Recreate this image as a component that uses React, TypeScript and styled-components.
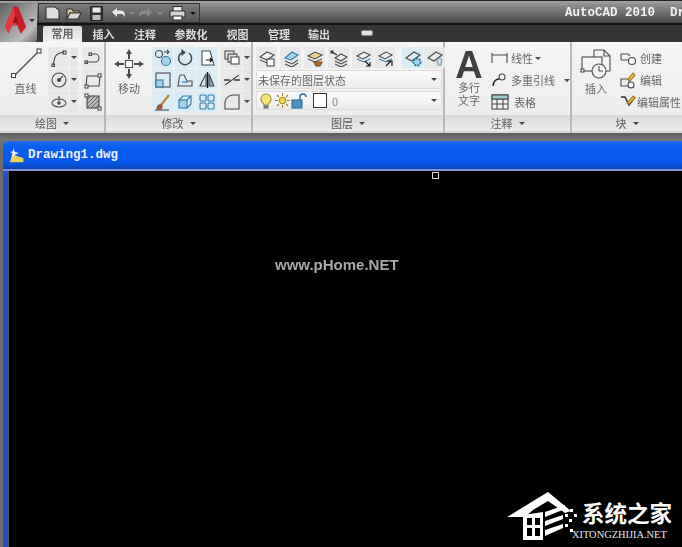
import React from "react";
import styled, { createGlobalStyle, css } from "styled-components";

const Global = createGlobalStyle`
  html, body { margin: 0; padding: 0; background: #000; }
  body { font-family: "Noto Sans CJK SC", "Liberation Sans", sans-serif; }
`;

/* the reference is a soft, low quality capture */
const soft = css`
  filter: blur(0.45px);
`;

const Page = styled.div`
  position: relative;
  width: 682px;
  height: 547px;
  overflow: hidden;
  display: flex;
  flex-direction: column;
  background: #000;
`;

/* top bars */
const TitleBar = styled.div`
  height: 25px;
  flex: none;
  box-sizing: border-box;
  display: flex;
  align-items: flex-start;
  justify-content: space-between;
  padding: 3px 0 0 38px;
  border-top: 1px solid #222;
  border-bottom: 2px solid #111;
  background: linear-gradient(#a2a2a2, #7e7e7e 35%, #474747);
`;

const QuickBar = styled.div`
  width: 162px;
  height: 20px;
  margin-top: -1px;
  box-sizing: border-box;
  display: flex;
  align-items: center;
  padding-left: 2px;
  border: 1px solid #333;
  background: linear-gradient(#7c7c7c, #565656);
  ${soft}
`;

const QuickSlot = styled.span<{ $w: number }>`
  width: ${(p) => p.$w}px;
  display: flex;
  justify-content: center;
  flex: none;
`;

const AppTitle = styled.div`
  width: 117px;
  overflow: hidden;
  white-space: pre;
  margin-top: 1px;
  font: bold 12.5px/16px "Liberation Mono", monospace;
  color: #f2f2f2;
  ${soft}
`;

const AppButton = styled.div`
  position: absolute;
  left: 0;
  top: 3px;
  width: 37px;
  height: 39px;
  border-radius: 0 0 3px 0;
  background: linear-gradient(135deg, #5e5e5e, #9c9c9c 50%, #bdbdbd 75%, #6a6a6a);
  display: flex;
  align-items: center;
  gap: 1px;
  padding: 0 0 5px 3px;
  box-sizing: border-box;
  ${soft}
`;

const TabBar = styled.div`
  height: 17px;
  flex: none;
  display: flex;
  padding-left: 43px;
  background: #353535;
`;

const Tab = styled.div<{ $w: number; $active?: boolean }>`
  width: ${(p) => p.$w}px;
  height: ${(p) => (p.$active ? 16 : 15)}px;
  margin-top: ${(p) => (p.$active ? 1 : 2)}px;
  text-align: center;
  font-size: 11px;
  font-weight: 700;
  line-height: 15px;
  color: ${(p) => (p.$active ? "#666" : "#dcdcdc")};
  background: ${(p) => (p.$active ? "linear-gradient(#dcdcdc,#f3f3f3)" : "transparent")};
  border-radius: 2px 2px 0 0;
  ${soft}
`;

const Pill = styled.span`
  display: block;
  width: 12px;
  height: 6px;
  margin: 5px 0 0 23px;
  border-radius: 2px;
  background: #e4e4e4;
  border: 1px solid #888;
  box-sizing: border-box;
`;

/* ribbon */
const Ribbon = styled.div`
  height: 91px;
  flex: none;
  display: flex;
`;

const Panel = styled.section<{ $w: number }>`
  width: ${(p) => p.$w}px;
  flex: none;
  display: flex;
  flex-direction: column;
  border-right: 2px solid #b9b9b9;
  box-sizing: border-box;
  &:last-child { border-right: 0; }
`;

const PanelBody = styled.div<{ $pad?: string }>`
  height: 73px;
  flex: none;
  box-sizing: border-box;
  padding: ${(p) => p.$pad ?? "5px 0 0 0"};
  display: flex;
  background: linear-gradient(#f5f5f5, #ededed);
  ${soft}
`;

const PanelFoot = styled.div`
  height: 18px;
  flex: none;
  display: flex;
  align-items: center;
  justify-content: center;
  gap: 6px;
  font-size: 11px;
  color: #5a5a5a;
  background: linear-gradient(#d9d9d9, #ececec);
  border-bottom: 2px solid #dadada;
  box-sizing: border-box;
  ${soft}
`;

const Caret = styled.span<{ $color?: string }>`
  display: inline-block;
  width: 0;
  height: 0;
  flex: none;
  border-left: 3px solid transparent;
  border-right: 3px solid transparent;
  border-top: 3px solid ${(p) => p.$color ?? "#444"};
`;

const BigTool = styled.div<{ $w: number }>`
  width: ${(p) => p.$w}px;
  flex: none;
  display: flex;
  flex-direction: column;
  align-items: center;
  font-size: 11px;
  line-height: 14px;
  color: #666;
`;

const BigIcon = styled.div`
  height: 34px;
  display: flex;
  align-items: center;
`;

const Rows = styled.div<{ $gap?: number }>`
  display: flex;
  flex-direction: column;
  gap: ${(p) => p.$gap ?? 1}px;
`;

const Row = styled.div<{ $gap?: number }>`
  display: flex;
  gap: ${(p) => p.$gap ?? 1}px;
`;

const Tile = styled.div<{ $blue?: boolean; $w?: number }>`
  width: ${(p) => p.$w ?? 21}px;
  height: 21px;
  flex: none;
  display: flex;
  align-items: center;
  justify-content: center;
  background: ${(p) => (p.$blue ? "#dcecf5" : "#e9e9e9")};
  border-radius: 1px;
`;

const CaretTile = styled(Tile)`
  width: 8px;
  background: #e6e6e6;
`;

const Spacer = styled.div<{ $w: number }>`
  width: ${(p) => p.$w}px;
  flex: none;
`;

const Combo = styled.div`
  width: 186px;
  height: 19px;
  box-sizing: border-box;
  display: flex;
  align-items: center;
  justify-content: space-between;
  padding: 0 4px 0 1px;
  font-size: 11px;
  color: #666;
  background: linear-gradient(#fbfbfb, #ececec);
  border: 1px solid #dcdcdc;
`;

const ComboLeft = styled.div`
  display: flex;
  align-items: center;
  gap: 1px;
`;

const ZeroText = styled.span`
  margin-left: 4px;
  color: #888;
`;

const ActionRow = styled.div<{ $gap?: number }>`
  height: 22px;
  display: flex;
  align-items: center;
  gap: ${(p) => p.$gap ?? 2}px;
  font-size: 11px;
  color: #666;
  white-space: nowrap;
`;

const BigA = styled.div`
  height: 34px;
  font: 700 38px/36px "Liberation Sans", sans-serif;
  color: #404040;
`;

const StackLabel = styled.div`
  font-size: 11px;
  line-height: 13px;
  color: #666;
  text-align: center;
`;

/* drawing window */
const Gap = styled.div`
  height: 8px;
  flex: none;
  background: linear-gradient(#5c5c5c, #7a7a7a);
`;

const DocWindow = styled.div`
  flex: 1;
  display: flex;
  flex-direction: column;
  background: #6d6d6d;
  padding-left: 3px;
`;

const DocTitle = styled.div`
  height: 30px;
  flex: none;
  box-sizing: border-box;
  display: flex;
  align-items: center;
  gap: 3px;
  padding: 0 0 0 6px;
  border-radius: 5px 0 0 0;
  background: linear-gradient(#1f6fe8, #0a5df0 20%, #0757ea 75%, #0a44b4);
  border-bottom: 2px solid #8090d0;
  font: bold 12.5px/16px "Liberation Mono", monospace;
  color: #eef2ff;
`;

const DocBody = styled.div`
  flex: 1;
  background: #000;
  border-left: 5px solid #2450c8;
  box-shadow: inset 1px 0 0 #555;
`;

const PickBox = styled.div`
  position: absolute;
  left: 432px;
  top: 172px;
  width: 7px;
  height: 7px;
  box-sizing: border-box;
  border: 1px solid #d8d8d8;
`;

const PhomeMark = styled.div`
  position: absolute;
  left: 275px;
  top: 255px;
  font: bold 15px/20px "Liberation Sans", sans-serif;
  color: #a8a8a8;
  white-space: nowrap;
  ${soft}
`;

const SiteMark = styled.div`
  position: absolute;
  left: 505px;
  top: 490px;
  width: 172px;
  height: 56px;
`;

const SiteName = styled.div`
  position: absolute;
  left: 77px;
  top: 6px;
  font-size: 22.5px;
  font-weight: 700;
  line-height: 32px;
  color: #fff;
  white-space: nowrap;
`;

const SiteUrl = styled.div`
  position: absolute;
  left: 67px;
  top: 38px;
  font: 10.4px/14px "Liberation Serif", serif;
  color: #e8e8e8;
  white-space: nowrap;
`;

/* icons */
const Ico = ({ s = 18, w, h, children }: { s?: number; w?: number; h?: number; children: React.ReactNode }) => (
  <svg width={w ?? s} height={h ?? s} viewBox={`0 0 ${w ?? s} ${h ?? s}`} fill="none" stroke="#4a4a4a" strokeWidth="1.1">
    {children}
  </svg>
);

const Dark = "#4a4a4a";
const Blue = "#a9d3ea";

const icons: Record<string, React.ReactNode> = {
  polyline: <><path d="M3 16 L5 8 Q7 4 14 3" /><rect x="13" y="2" width="3" height="3" /><rect x="2" y="15" width="2.5" height="2.5" /></>,
  circle: <><circle cx="9" cy="9" r="7" /><circle cx="9" cy="9" r="1.5" fill={Dark} /><path d="M9 9 L13 5" /></>,
  ellipse: <><ellipse cx="9" cy="10" rx="7" ry="4" /><circle cx="9" cy="10" r="1.2" fill={Dark} /><path d="M9 3v5" /></>,
  hook: <><path d="M2 13 H11 A4 4 0 0 0 11 5 H7" /><rect x="1" y="12" width="2.5" height="2.5" /><rect x="5" y="4" width="2.5" height="2.5" /></>,
  rect: <><path d="M3 5 H16 L15 15 H2 Z" /><rect x="14" y="3" width="3" height="3" fill="#fff" /><rect x="1" y="14" width="3" height="3" fill="#fff" /></>,
  hatch: <><rect x="3" y="3" width="12" height="12" fill="#bbb" /><path d="M3 7l4-4M3 11l8-8M3 15l12-12M7 15l8-8M11 15l4-4" strokeWidth=".8" /><rect x="1" y="1" width="3" height="3" fill="#fff" /><rect x="14" y="14" width="3" height="3" fill="#fff" /></>,
  copy: <><circle cx="5" cy="5" r="3.5" /><circle cx="12" cy="12" r="4.5" fill={Blue} stroke="#2b7aa8" /><path d="M10 3h5M13 1l2 2-2 2" /></>,
  rotate: <><path d="M13 4 A6.5 6.5 0 1 1 6 3.5" strokeWidth="1.5" /><path d="M6 1v5l3-2.5z" fill={Dark} /></>,
  stretch: <><path d="M4 2 H12 L16 16 H4 Z" fill="#fff" /><path d="M8 11h6M12 9l2 2-2 2" stroke="#111" /></>,
  layers: <><rect x="2" y="2" width="9" height="8" /><rect x="5" y="5" width="9" height="8" fill="#ddd" /><rect x="8" y="8" width="8" height="7" fill="#fff" /></>,
  scale: <><rect x="2" y="2" width="14" height="14" /><rect x="2" y="9" width="7" height="7" fill={Blue} stroke="#2b7aa8" /></>,
  fillet: <><path d="M2 15 H16 V10 H11 L8 4 H5 Q3 4 3 9 Z" /><path d="M6 11h6" stroke="#2b7aa8" /></>,
  mirror: <><path d="M8 3 L2 15 H8 Z" /><path d="M11 3 L16 15 H11 Z" fill="#7fa8c0" /><path d="M9.500 1v16" stroke="#111" strokeWidth="1.4" /></>,
  trim: <><path d="M2 14 L16 4" /><path d="M1 9h6M11 9h6" stroke="#333" strokeWidth="1.3" /></>,
  brush: <><path d="M15 2 L7 12" stroke="#b98a3a" strokeWidth="2.4" /><path d="M3 16 Q4 11 7 12 Q9 14 7 16 Z" fill="#c05a2a" stroke="#7a4a2a" /><path d="M1 17h14" /></>,
  box3d: <><rect x="3" y="7" width="8" height="8" fill={Blue} stroke="#2b7aa8" /><path d="M3 7l4-4h8v8l-4 4M11 7l4-4" stroke="#2b7aa8" /></>,
  array: <><rect x="2" y="2" width="6" height="6" rx="1" stroke="#2b7aa8" /><rect x="10" y="2" width="6" height="6" rx="1" stroke="#2b7aa8" /><rect x="2" y="10" width="6" height="6" rx="1" stroke="#2b7aa8" /><rect x="10" y="10" width="6" height="6" rx="1" stroke="#2b7aa8" /></>,
  chamfer: <><path d="M2 16 V9 Q3 3 10 2 H16 V16 Z" /></>,
  layerA: <><path d="M2 8l7-5 7 3-7 5z" fill="#f4f4f4" /><path d="M2 11l7 3 7-4" /><rect x="9" y="10" width="7" height="7" fill="#fff" /></>,
  layerB: <><path d="M3 9l7-6 6 3-7 5z" fill={Blue} stroke="#2b7aa8" /><path d="M3 12l7 3 6-4M3 15l7 3 6-4" /></>,
  layerC: <><path d="M2 7l7-4 7 3-7 4z" fill="#f0d090" /><path d="M2 10l7 3 7-3" /><path d="M8 13h8l-2 4h-4z" fill="#b06a22" stroke="#7a4a22" /></>,
  layerD: <><path d="M5 9l6-4 6 3-6 4z" /><path d="M5 12l6 3 6-3M5 15l6 3 6-3" /><path d="M2 3l5 3" stroke="#222" /><rect x="1" y="2" width="2" height="2" fill="#222" /></>,
  layerE: <><path d="M3 7l7-4 6 3-7 4z" fill="#eee" /><path d="M3 10l7 3 6-3" stroke="#2b7aa8" /><path d="M11 12l5 5M16 13v4h-4" stroke="#111" /></>,
  layerF: <><path d="M3 7l7-4 6 3-7 4z" fill="#eee" /><path d="M3 10l7 3 6-3" stroke="#2b7aa8" /><path d="M15 12l-5 5M11 12h5v5" stroke="#111" /></>,
  gear: <><path d="M2 9l8-6 6 3-8 6z" /><circle cx="13" cy="13" r="3.5" fill={Blue} stroke="#2b7aa8" strokeWidth="2" strokeDasharray="2 1" /></>,
  bulbTile: <><path d="M2 9l8-6 6 3-8 6z" /><path d="M13 9a3 3 0 0 1 2 5v2h-3v-2a3 3 0 0 1 1-5z" fill="#cfe4f2" stroke="#6a9ab8" /></>,
  dim: <><path d="M1 4v10M16 4v10M1 6h15" /></>,
  leader: <><path d="M2 15 Q3 8 8 8" stroke="#222" strokeWidth="1.5" /><circle cx="11" cy="6" r="3" /></>,
  table: <><rect x="1" y="2" width="16" height="14" fill="#f4f4f4" /><path d="M1 6h16M1 11h16M6 6v10M12 6v10" /><rect x="1" y="2" width="16" height="4" fill="#9cc" /></>,
  create: <><path d="M2 5h7M2 11h9M2 5v6M9 5l2 2" /><circle cx="13" cy="12" r="3.500" fill="#fff" /></>,
  edit: <><path d="M2 8h8v7H2z" /><circle cx="12" cy="14" r="3" fill="#fff" /><path d="M9 8l5-6 2 2-5 6z" fill="#e8b93a" stroke="#a07a20" /></>,
  attr: <><path d="M2 4l4 0 4 8 6-8" stroke="#333" strokeWidth="1.6" /><path d="M8 10l6-7 2 2-6 6z" fill="#e8b93a" stroke="#a07a20" /></>,
};

const Icon = ({ name, s }: { name: string; s?: number }) => <Ico s={s}>{icons[name]}</Ico>;

const LineIcon = () => (
  <Ico w={34} h={34}>
    <path d="M5 29 L30 4" strokeWidth="1.2" />
    <rect x="2.5" y="26.5" width="4" height="4" fill="#fff" />
    <rect x="28" y="2" width="4" height="4" fill="#fff" />
  </Ico>
);

const MoveIcon = () => (
  <Ico w={32} h={34}>
    <rect x="12.5" y="13.5" width="7" height="7" fill="#fff" />
    <g fill={Dark} stroke="none">
      <path d="M16 2l3 5h-2v5h-2V7h-2zM16 32l3-5h-2v-5h-2v5h-2zM1 17l5-3v2h5v2H6v2zM31 17l-5-3v2h-5v2h5v2z" />
    </g>
  </Ico>
);

const InsertIcon = () => (
  <Ico w={32} h={32}>
    <path d="M14 9V2h10l6 6v15h-6" fill="#f4f4f4" />
    <path d="M24 2v6h6" />
    <rect x="2" y="9" width="20" height="14" fill="#f4f4f4" />
    <circle cx="19" cy="23" r="7" fill="#f4f4f4" />
    <path d="M19 23v-5M19 23h4" />
    <rect x="1" y="21" width="3" height="3" fill="#fff" />
  </Ico>
);

const BulbIcon = () => (
  <Ico s={16}>
    <path d="M8 1a5 5 0 0 1 3 9l-1 2H6l-1-2a5 5 0 0 1 3-9z" fill="#f4e27a" stroke="#a09030" />
    <path d="M6 13h4v2H6z" fill="#888" stroke="#666" />
  </Ico>
);

const SunIcon = () => (
  <Ico s={15}>
    <circle cx="7.5" cy="7.5" r="3.2" fill="#f4d34a" stroke="#a09030" />
    <path d="M7.5 0v3M7.5 12v3M0 7.5h3M12 7.5h3M2 2l2 2M11 11l2 2M13 2l-2 2M4 11l-2 2" stroke="#a08020" />
  </Ico>
);

const LockIcon = () => (
  <Ico s={16}>
    <path d="M9 7V4a3 3 0 0 1 6 0" stroke="#2b6a98" strokeWidth="1.4" />
    <rect x="1" y="7" width="10" height="8" fill="#4e93c4" stroke="#2b6a98" />
  </Ico>
);

const Swatch = styled.span`
  display: block;
  width: 12px;
  height: 13px;
  margin-left: 5px;
  background: #fff;
  border: 1px solid #333;
`;

const LogoA = () => (
  <svg width="25" height="30" viewBox="0 0 26 34">
    <path d="M11 1 L16 2 L25 25 L19 33 L15 23 L9 23 L5 32 L1 24 Z" fill="#c81f26" />
    <path d="M11 1 L14 23 L9 23 L5 32 L1 24 Z" fill="#e0383c" />
    <path d="M13 12 L16 20 L10 20 Z" fill="#8f1218" />
  </svg>
);

const FileGlyph = () => (
  <Ico w={15} h={14}>
    <path d="M1 1h9l4 3v9H1z" fill="#dedede" stroke="#333" />
  </Ico>
);

const OpenGlyph = () => (
  <Ico w={16} h={14}>
    <path d="M1 3h5l1 2h6v2H4l-3 6z" fill="#d9c98e" stroke="#333" />
    <path d="M4 7h11l-3 6H1z" fill="#d8d8d8" stroke="#333" />
  </Ico>
);

const SaveGlyph = () => (
  <Ico w={13} h={15}>
    <rect x="0.5" y="0.5" width="12" height="14" rx="1" fill="#333" stroke="#222" />
    <rect x="2.5" y="1.5" width="8" height="5" fill="#e8e8e8" stroke="none" />
    <rect x="2.5" y="9" width="8" height="5" fill="#bbb" stroke="none" />
  </Ico>
);

const ArrowGlyph = ({ back, dim }: { back?: boolean; dim?: boolean }) => (
  <svg width="14" height="11" viewBox="0 0 14 11" style={back ? undefined : { transform: "scaleX(-1)" }}>
    <path d="M1 4l5-4v2.500h4a4 4 0 0 1 3 6.500 3 3 0 0 0-3-3H6V9z" fill={dim ? "#8b8b8b" : "#e8e8e8"} />
  </svg>
);

const PrintGlyph = () => (
  <Ico w={17} h={15}>
    <rect x="4" y="0.500" width="9" height="5" fill="#eee" stroke="#333" />
    <rect x="1" y="5" width="15" height="6" rx="1" fill="#d4d4d4" stroke="#333" />
    <rect x="4" y="10" width="9" height="4" fill="#fff" stroke="#333" />
  </Ico>
);

const HouseLogo = () => (
  <svg width="72" height="56" viewBox="0 0 72 56" fill="#fff">
    <path d="M2 27 L43 2 L66 21 L60 23 L43 11 L28 20 L20 27 Z" />
    <path d="M18 25 L38 22 V50 L18 50 Z M22 28 V35 H27 V28 Z M30 28 V35 H35 V28 Z M22 38 V46 H27 V38 Z M30 38 V46 H35 V38 Z" fillRule="evenodd" />
    <path d="M40 22 L60 15 V19 L40 27 Z M40 31 L58 25 V29 L40 36 Z M40 40 L58 34 V38 L40 46 Z" />
    <g>
      <rect x="60" y="24" width="3" height="3" />
      <rect x="65" y="19" width="3" height="3" />
      <rect x="64" y="29" width="3" height="3" />
      <rect x="69" y="24" width="3" height="3" />
      <rect x="60" y="34" width="3" height="3" />
      <rect x="65" y="39" width="3" height="3" />
    </g>
  </svg>
);

const DocGlyph = () => (
  <svg width="16" height="18" viewBox="0 0 19 19">
    <path d="M1 18 L4 8 L10 11 L17 13 V18 Z" fill="#ecd45a" />
    <path d="M5 1 l2 5 5 1 -5 2 -3 3 0-5 -3-1 4-1z" fill="#f4f4f4" />
  </svg>
);

const tabs: [string, number][] = [
  ["插入", 43],
  ["注释", 40],
  ["参数化", 52],
  ["视图", 41],
  ["管理", 42],
  ["输出", 38],
];

const layerIcons = ["layerA", "layerB", "layerC", "layerD"];

export default function App() {
  return (
    <Page>
      <Global />
      <TitleBar>
        <QuickBar>
          <QuickSlot $w={22}><FileGlyph /></QuickSlot>
          <QuickSlot $w={22}><OpenGlyph /></QuickSlot>
          <QuickSlot $w={22}><SaveGlyph /></QuickSlot>
          <QuickSlot $w={22}><ArrowGlyph back /></QuickSlot>
          <QuickSlot $w={6}><Caret $color="#888" /></QuickSlot>
          <QuickSlot $w={22}><ArrowGlyph dim /></QuickSlot>
          <QuickSlot $w={6}><Caret $color="#888" /></QuickSlot>
          <QuickSlot $w={3} />
          <QuickSlot $w={22}><PrintGlyph /></QuickSlot>
          <QuickSlot $w={10}><Caret $color="#111" /></QuickSlot>
        </QuickBar>
        <AppTitle>AutoCAD 2010  Dr</AppTitle>
      </TitleBar>
      <TabBar>
        <Tab $w={39} $active>常用</Tab>
        {tabs.map(([label, w]) => (
          <Tab key={label} $w={w}>{label}</Tab>
        ))}
        <Pill />
      </TabBar>
      <Ribbon>
        <Panel $w={106}>
          <PanelBody>
            <Spacer $w={3} />
            <BigTool $w={45}>
              <BigIcon><LineIcon /></BigIcon>
              直线
            </BigTool>
            <Rows>
              {["polyline", "circle", "ellipse"].map((n) => (
                <Row key={n}>
                  <Tile><Icon name={n} /></Tile>
                  <CaretTile><Caret /></CaretTile>
                </Row>
              ))}
            </Rows>
            <Spacer $w={4} />
            <Rows>
              {["hook", "rect", "hatch"].map((n) => (
                <Tile key={n}><Icon name={n} /></Tile>
              ))}
            </Rows>
          </PanelBody>
          <PanelFoot>绘图<Caret /></PanelFoot>
        </Panel>
        <Panel $w={147}>
          <PanelBody>
            <Spacer $w={6} />
            <BigTool $w={34}>
              <BigIcon><MoveIcon /></BigIcon>
              移动
            </BigTool>
            <Spacer $w={6} />
            <Rows>
              {[
                ["copy", "rotate", "stretch", "layers"],
                ["scale", "fillet", "mirror", "trim"],
                ["brush", "box3d", "array", "chamfer"],
              ].map((r) => (
                <Row key={r[0]}>
                  <Tile $blue><Icon name={r[0]} /></Tile>
                  <Tile $blue><Icon name={r[1]} /></Tile>
                  <Tile $blue><Icon name={r[2]} /></Tile>
                  <Spacer $w={2} />
                  <Tile><Icon name={r[3]} /></Tile>
                  <CaretTile><Caret /></CaretTile>
                </Row>
              ))}
            </Rows>
          </PanelBody>
          <PanelFoot>修改<Caret /></PanelFoot>
        </Panel>
        <Panel $w={192}>
          <PanelBody $pad="5px 0 0 3px">
            <Rows $gap={2}>
              <Row $gap={3}>
                <Row $gap={3}>
                  {layerIcons.map((n) => (
                    <Tile key={n}><Icon name={n} /></Tile>
                  ))}
                </Row>
                <Row>
                  <Tile><Icon name="layerE" /></Tile>
                  <Tile><Icon name="layerF" /></Tile>
                </Row>
                <Spacer $w={1} />
                <Row>
                  <Tile $blue><Icon name="gear" /></Tile>
                  <Tile><Icon name="bulbTile" /></Tile>
                </Row>
              </Row>
              <Combo>未保存的图层状态<Caret /></Combo>
              <Combo>
                <ComboLeft>
                  <BulbIcon />
                  <SunIcon />
                  <LockIcon />
                  <Swatch />
                  <ZeroText>0</ZeroText>
                </ComboLeft>
                <Caret />
              </Combo>
            </Rows>
          </PanelBody>
          <PanelFoot>图层<Caret /></PanelFoot>
        </Panel>
        <Panel $w={127}>
          <PanelBody>
            <Spacer $w={9} />
            <BigTool $w={30}>
              <BigA>A</BigA>
              <StackLabel>多行<br />文字</StackLabel>
            </BigTool>
            <Spacer $w={7} />
            <Rows $gap={0}>
              <ActionRow><Icon name="dim" />线性<Caret /></ActionRow>
              <ActionRow><Icon name="leader" />多重引线<Spacer $w={5} /><Caret /></ActionRow>
              <ActionRow><Icon name="table" /><Spacer $w={1} />表格</ActionRow>
            </Rows>
          </PanelBody>
          <PanelFoot>注释<Caret /></PanelFoot>
        </Panel>
        <Panel $w={110}>
          <PanelBody>
            <Spacer $w={6} />
            <BigTool $w={36}>
              <BigIcon><InsertIcon /></BigIcon>
              插入
            </BigTool>
            <Spacer $w={5} />
            <Rows $gap={0}>
              <ActionRow $gap={3}><Icon name="create" />创建</ActionRow>
              <ActionRow $gap={3}><Icon name="edit" />编辑</ActionRow>
              <ActionRow $gap={0}><Icon name="attr" />编辑属性</ActionRow>
            </Rows>
          </PanelBody>
          <PanelFoot>块<Caret /></PanelFoot>
        </Panel>
      </Ribbon>
      <Gap />
      <DocWindow>
        <DocTitle><DocGlyph />Drawing1.dwg</DocTitle>
        <DocBody />
      </DocWindow>
      <AppButton><LogoA /><Caret $color="#333" /></AppButton>
      <PickBox />
      <PhomeMark>www.pHome.NET</PhomeMark>
      <SiteMark>
        <HouseLogo />
        <SiteName>系统之家</SiteName>
        <SiteUrl>XITONGZHIJIA.NET</SiteUrl>
      </SiteMark>
    </Page>
  );
}
